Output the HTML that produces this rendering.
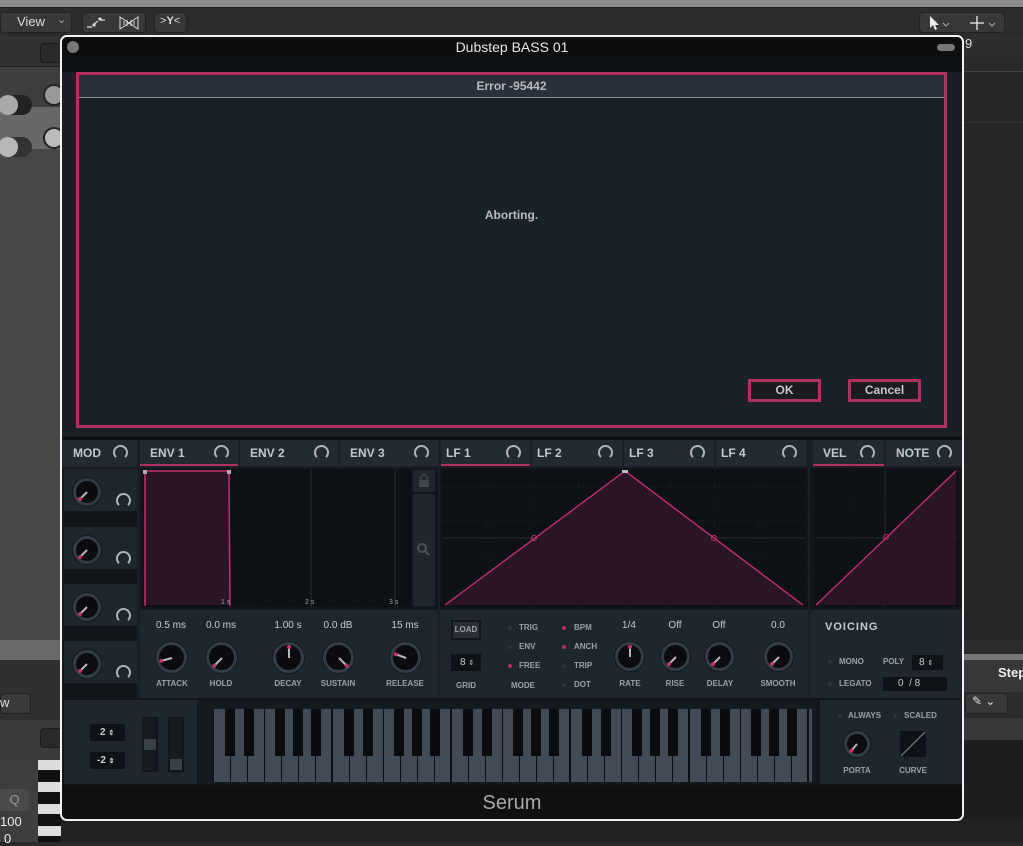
<!DOCTYPE html>
<html><head><meta charset="utf-8"><style>
*{margin:0;padding:0;box-sizing:border-box}
body{width:1023px;height:842px;overflow:hidden;position:relative;background:#2a2a2a;font-family:"Liberation Sans",sans-serif}
.a{position:absolute}
.t{position:absolute;color:#c4c9ce;font-size:12px;font-weight:bold;white-space:nowrap}
.lbl{position:absolute;color:#9aa1a8;font-size:8px;font-weight:bold;transform:translateX(-50%);white-space:nowrap}
.val{position:absolute;color:#c8ccd0;font-size:10px;transform:translateX(-50%);white-space:nowrap}
.k{position:absolute;border-radius:50%;background:#0a0c0f;border:3px solid #343c45;box-shadow:0 0 0 1px #14181c}
.k i{position:absolute;left:50%;top:50%;width:2px;height:45%;margin-left:-1px;background:#b8b8b8;transform-origin:top center}
.k i:after{content:"";position:absolute;bottom:-2px;left:-1px;width:4px;height:4px;background:#c2306a;border-radius:50%}
.arc{position:absolute;width:15px;height:15px;border-radius:50%;border:2px solid #b0b4b8;border-bottom-color:transparent}
.tab{position:absolute;top:440px;height:26px;background:#232a32}
.tab .t{top:6px;left:10px}
.tab .arc{top:5px;right:9px}
.dot{position:absolute;width:4px;height:4px;border-radius:50%;background:#2e353c}
.dot.m{background:#b0305f}
.sm{position:absolute;color:#9aa1a8;font-size:8px;font-weight:bold}
</style></head><body>
<div class="a" style="left:0;top:0;width:1023px;height:7px;background:#8c8c8c"></div>
<div class="a" style="left:0;top:7px;width:1023px;height:29px;background:#2c2c2c;border-top:1px solid #1a1a1a"></div>
<div class="a" style="left:0;top:12px;width:72px;height:21px;background:#383838;border:1px solid #222;border-radius:4px"></div>
<div class="a" style="left:17px;top:14px;color:#ddd;font-size:13px">View</div>
<div class="a" style="left:57px;top:13px;color:#aaa;font-size:11px">⌄</div>
<div class="a" style="left:82px;top:12px;width:64px;height:21px;background:#383838;border:1px solid #222;border-radius:4px"></div>
<svg class="a" style="left:84px;top:14px" width="60" height="17"><path d="M3 13h5M9 11l5-4M16 6h5" stroke="#ddd" stroke-width="1.3" fill="none"/><circle cx="10" cy="11" r="1.6" fill="#ddd"/><circle cx="16" cy="5" r="1.6" fill="#ddd"/><path d="M36 3v12l9-6 9 6V3l-9 6z" stroke="#ddd" fill="none"/><path d="M40 7v4M43 6v6M47 6v6M50 7v4" stroke="#ddd"/></svg>
<div class="a" style="left:154px;top:12px;width:33px;height:21px;background:#383838;border:1px solid #222;border-radius:4px"></div>
<div class="a" style="left:160px;top:15px;color:#ddd;font-size:11px">&gt;<b>Y</b>&lt;</div>
<div class="a" style="left:919px;top:12px;width:86px;height:21px;background:#383838;border:1px solid #222;border-radius:4px"></div>
<svg class="a" style="left:925px;top:14px" width="78" height="17"><path d="M5 2v12l3-3 2 5 2-1-2-4h4z" fill="#eee"/><path d="M18 9l3 3 3-3" stroke="#aaa" fill="none"/><path d="M52 2v14M45 9h14" stroke="#eee" stroke-width="1.3"/><path d="M64 9l3 3 3-3" stroke="#aaa" fill="none"/></svg>

<div class="a" style="left:0;top:36px;width:61px;height:30px;background:#323232"></div>
<div class="a" style="left:40px;top:43px;width:24px;height:20px;background:#2a2a2a;border:1px solid #1b1b1b;border-radius:4px"></div>
<div class="a" style="left:0;top:66px;width:61px;height:41px;background:#3e3e3e;border-top:1px solid #222"></div>
<div class="a" style="left:0;top:107px;width:61px;height:42px;background:#686868"></div>
<div class="a" style="left:0;top:149px;width:61px;height:491px;background:#474747"></div>
<div class="a" style="left:0;top:95px;width:32px;height:20px;background:#222;border-radius:10px"></div>
<div class="a" style="left:-2px;top:95px;width:20px;height:20px;background:#aaa;border-radius:50%"></div>
<div class="a" style="left:0;top:137px;width:32px;height:20px;background:#333;border-radius:10px"></div>
<div class="a" style="left:-2px;top:137px;width:20px;height:20px;background:#b8b8b8;border-radius:50%"></div>
<div class="a" style="left:43px;top:84px;width:22px;height:22px;background:#999;border-radius:50%;border:2px solid #222"></div>
<div class="a" style="left:43px;top:127px;width:22px;height:22px;background:#bbb;border-radius:50%;border:2px solid #222"></div>
<div class="a" style="left:0;top:640px;width:61px;height:20px;background:#6a6a6a"></div>
<div class="a" style="left:0;top:660px;width:61px;height:60px;background:#303030"></div>
<div class="a" style="left:0;top:693px;width:31px;height:21px;background:#3a3a3a;border:1px solid #222;border-radius:4px"></div>
<div class="a" style="left:0;top:695px;color:#ddd;font-size:13px">w</div>
<div class="a" style="left:0;top:720px;width:61px;height:40px;background:#3a3a3a"></div>
<div class="a" style="left:40px;top:728px;width:24px;height:20px;background:#2a2a2a;border:1px solid #1b1b1b;border-radius:4px"></div>
<div class="a" style="left:0;top:760px;width:38px;height:82px;background:#3e3e3e"></div>
<div class="a" style="left:0;top:789px;width:29px;height:22px;background:#4a4a4a;border-radius:3px;color:#999;font-size:13px;text-align:center;line-height:22px">Q</div>
<div class="a" style="left:0;top:814px;color:#eee;font-size:13px">100</div>
<div class="a" style="left:4px;top:831px;color:#eee;font-size:13px">0</div>
<div class="a" style="left:38px;top:760px;width:23px;height:82px;background:repeating-linear-gradient(#ddd 0 10px,#111 10px 22px)"></div>

<div class="a" style="left:963px;top:36px;width:60px;height:20px;background:#2e2e2e"></div>
<div class="a" style="left:965px;top:36px;color:#ddd;font-size:13px">9</div>
<div class="a" style="left:963px;top:56px;width:60px;height:16px;background:#2a2a2a;border-bottom:1px solid #444"></div>
<div class="a" style="left:963px;top:72px;width:60px;height:568px;background:#262626"></div>
<div class="a" style="left:963px;top:122px;width:60px;height:1px;background:#333"></div>
<div class="a" style="left:963px;top:640px;width:60px;height:14px;background:#2c2c2c"></div>
<div class="a" style="left:963px;top:654px;width:60px;height:6px;background:#777"></div>
<div class="a" style="left:963px;top:660px;width:60px;height:32px;background:#383838"></div>
<div class="a" style="left:998px;top:665px;color:#eee;font-size:13px;font-weight:bold">Step</div>
<div class="a" style="left:963px;top:692px;width:60px;height:26px;background:#2c2c2c"></div>
<div class="a" style="left:965px;top:693px;width:43px;height:21px;background:#383838;border:1px solid #222;border-radius:4px;color:#ddd;font-size:12px;padding-left:6px">✎ ⌄</div>
<div class="a" style="left:963px;top:718px;width:60px;height:22px;background:#393939"></div>
<div class="a" style="left:963px;top:740px;width:60px;height:102px;background:#1e1e1e"></div>
<div class="a" style="left:61px;top:820px;width:962px;height:22px;background:#222"></div>

<div class="a" style="left:60px;top:35px;width:904px;height:786px;border:2px solid #f2f2f2;border-radius:7px;background:#1a1f25;overflow:hidden">
 <div class="a" style="left:0;top:0;width:900px;height:21px;background:#0e0e0e"></div>
 <div class="a" style="left:5px;top:4px;width:12px;height:12px;border-radius:50%;background:#777"></div>
 <div class="a" style="left:875px;top:7px;width:18px;height:7px;border-radius:4px;background:#777"></div>
 <div class="a" style="left:0;top:2px;width:900px;text-align:center;color:#e6e6e6;font-size:14px">Dubstep BASS 01</div>
 <div class="a" style="left:0;top:21px;width:900px;height:14px;background:#0c1014"></div>
 <div class="a" style="left:0;top:748px;width:900px;height:36px;background:#101010"></div>
 <div class="a" style="left:0;top:755px;width:900px;text-align:center;color:#a8a8a8;font-size:20px">Serum</div>
</div>

<div class="a" style="left:76px;top:72px;width:871px;height:356px;border:3px solid #b0305f;background:#1b2129"></div>
<div class="a" style="left:79px;top:75px;width:865px;height:23px;background:#2a3039;border-bottom:1px solid #8a8f95"></div>
<div class="a" style="left:79px;top:79px;width:865px;text-align:center;color:#b8bcc0;font-size:12px;font-weight:bold">Error -95442</div>
<div class="a" style="left:79px;top:208px;width:865px;text-align:center;color:#b8bcc0;font-size:12px;font-weight:bold">Aborting.</div>
<div class="a" style="left:748px;top:379px;width:73px;height:23px;border:3px solid #b0305f;background:#1a1c20;color:#c8c8c8;font-size:12px;font-weight:bold;text-align:center;line-height:17px">OK</div>
<div class="a" style="left:848px;top:379px;width:73px;height:23px;border:3px solid #b0305f;background:#1a1c20;color:#c8c8c8;font-size:12px;font-weight:bold;text-align:center;line-height:17px">Cancel</div>

<div class="a" style="left:63px;top:437px;width:898px;height:3px;background:#0c0f12"></div>
<div class="tab" style="left:63px;width:74px"><span class="t">MOD</span><span class="arc"></span></div>
<div class="tab" style="left:140px;width:98px;border-bottom:2px solid #b0305f"><span class="t">ENV 1</span><span class="arc"></span></div>
<div class="tab" style="left:240px;width:98px"><span class="t">ENV 2</span><span class="arc"></span></div>
<div class="tab" style="left:340px;width:98px"><span class="t">ENV 3</span><span class="arc"></span></div>
<div class="tab" style="left:441px;width:89px;border-bottom:2px solid #b0305f"><span class="t" style="left:5px">LF 1</span><span class="arc"></span></div>
<div class="tab" style="left:532px;width:90px"><span class="t" style="left:5px">LF 2</span><span class="arc"></span></div>
<div class="tab" style="left:624px;width:90px"><span class="t" style="left:5px">LF 3</span><span class="arc"></span></div>
<div class="tab" style="left:716px;width:90px"><span class="t" style="left:5px">LF 4</span><span class="arc"></span></div>
<div class="tab" style="left:813px;width:71px;border-bottom:2px solid #b0305f"><span class="t">VEL</span><span class="arc"></span></div>
<div class="tab" style="left:886px;width:75px"><span class="t">NOTE</span><span class="arc"></span></div>

<div class="a" style="left:63px;top:468px;width:74px;height:230px;background:#12161a"></div>
<div class="a" style="left:64px;top:469px;width:73px;height:42px;background:#1f262d"></div>
<div class="a" style="left:64px;top:527px;width:73px;height:42px;background:#1f262d"></div>
<div class="a" style="left:64px;top:584px;width:73px;height:42px;background:#1f262d"></div>
<div class="a" style="left:64px;top:641px;width:73px;height:42px;background:#1f262d"></div>
<div class="k" style="left:73px;top:478px;width:28px;height:28px"><i style="transform:rotate(45deg)"></i></div>
<div class="k" style="left:73px;top:536px;width:28px;height:28px"><i style="transform:rotate(45deg)"></i></div>
<div class="k" style="left:73px;top:593px;width:28px;height:28px"><i style="transform:rotate(45deg)"></i></div>
<div class="k" style="left:73px;top:650px;width:28px;height:28px"><i style="transform:rotate(45deg)"></i></div>
<span class="arc" style="left:116px;top:493px"></span>
<span class="arc" style="left:116px;top:551px"></span>
<span class="arc" style="left:116px;top:608px"></span>
<span class="arc" style="left:116px;top:665px"></span>

<div class="a" style="left:140px;top:468px;width:298px;height:140px;background:#12161a"></div>
<svg class="a" style="left:143px;top:470px" width="268" height="137">
 <rect width="268" height="137" fill="#0d1115"/>
 <g stroke="#1c2228" stroke-dasharray="1 4"><path d="M21 0v137M42 0v137M63 0v137M105 0v137M126 0v137M147 0v137M189 0v137M210 0v137M231 0v137"/></g>
 <path d="M168 0v137M252 0v137" stroke="#2a3036"/>
 <rect x="2" y="1" width="84" height="134" fill="#2a1526"/>
 <path d="M2 136V1h84l1 135" stroke="#c2306a" stroke-width="1.5" fill="none"/>
 <rect x="0" y="0" width="4" height="4" fill="#aaa"/><rect x="84" y="0" width="4" height="4" fill="#aaa"/>
 <text x="78" y="134" fill="#9aa1a8" font-size="7" font-family="Liberation Sans">1 s</text>
 <text x="162" y="134" fill="#9aa1a8" font-size="7" font-family="Liberation Sans">2 s</text>
 <text x="246" y="134" fill="#9aa1a8" font-size="7" font-family="Liberation Sans">3 s</text>
</svg>
<div class="a" style="left:413px;top:470px;width:22px;height:22px;background:#1f262d"></div>
<svg class="a" style="left:418px;top:474px" width="12" height="14"><path d="M3 6V4a3 3 0 016 0v2" stroke="#3e464e" stroke-width="1.5" fill="none"/><rect x="1" y="6" width="10" height="7" fill="#3e464e"/></svg>
<div class="a" style="left:413px;top:494px;width:22px;height:112px;background:#1f262d"></div>
<svg class="a" style="left:417px;top:543px" width="14" height="14"><circle cx="5" cy="5" r="4" stroke="#4a525a" stroke-width="2" fill="none"/><path d="M8 8l4 4" stroke="#4a525a" stroke-width="2"/></svg>

<div class="a" style="left:140px;top:608px;width:298px;height:90px;background:#1f262d;border-top:2px solid #12161a"></div>
<div class="val" style="left:171px;top:620px">0.5 ms</div>
<div class="val" style="left:221px;top:620px">0.0 ms</div>
<div class="val" style="left:288px;top:620px">1.00 s</div>
<div class="val" style="left:338px;top:620px">0.0 dB</div>
<div class="val" style="left:405px;top:620px">15 ms</div>
<div class="k" style="left:156px;top:642px;width:31px;height:31px"><i style="transform:rotate(75deg)"></i></div>
<div class="k" style="left:206px;top:642px;width:31px;height:31px"><i style="transform:rotate(45deg)"></i></div>
<div class="k" style="left:273px;top:642px;width:31px;height:31px"><i style="transform:rotate(180deg)"></i></div>
<div class="k" style="left:323px;top:642px;width:31px;height:31px"><i style="transform:rotate(-45deg)"></i></div>
<div class="k" style="left:390px;top:642px;width:31px;height:31px"><i style="transform:rotate(110deg)"></i></div>
<div class="lbl" style="left:172px;top:679px">ATTACK</div>
<div class="lbl" style="left:221px;top:679px">HOLD</div>
<div class="lbl" style="left:288px;top:679px">DECAY</div>
<div class="lbl" style="left:338px;top:679px">SUSTAIN</div>
<div class="lbl" style="left:405px;top:679px">RELEASE</div>

<div class="a" style="left:440px;top:468px;width:368px;height:140px;background:#12161a"></div>
<svg class="a" style="left:443px;top:470px" width="362" height="137">
 <rect width="362" height="137" fill="#0d1115"/>
 <g stroke="#1e252b" stroke-dasharray="1 3"><path d="M45 0v137M90 0v137M135 0v137M227 0v137M272 0v137M317 0v137M0 17h362M0 51h362M0 85h362M0 119h362"/></g>
 <path d="M0 34h362M0 102h362M182 0v137" stroke="#1e252b" stroke-dasharray="1 3"/>
 <path d="M0 68h362" stroke="#222a30"/>
 <path d="M2 135L182 1L360 135z" fill="#2a1526"/>
 <path d="M2 135L182 1L360 135" stroke="#c2306a" stroke-width="1.4" fill="none"/>
 <circle cx="91" cy="68" r="2.5" stroke="#c2306a" fill="none"/><circle cx="271" cy="68" r="2.5" stroke="#c2306a" fill="none"/>
 <rect x="179" y="0" width="6" height="3" fill="#bbb"/>
</svg>

<div class="a" style="left:810px;top:468px;width:151px;height:140px;background:#12161a"></div>
<svg class="a" style="left:815px;top:470px" width="143" height="137">
 <rect width="143" height="137" fill="#0d1115"/>
 <path d="M0 34h143M0 102h143M35 0v137M105 0v137" stroke="#1e252b" stroke-dasharray="1 3"/>
 <path d="M0 68h143M70 0v137" stroke="#222a30"/>
 <path d="M1 135L141 1V135z" fill="#2a1526"/>
 <path d="M1 135L141 1" stroke="#c2306a" stroke-width="1.4"/>
 <circle cx="71" cy="67" r="2.5" stroke="#c2306a" fill="none"/>
</svg>

<div class="a" style="left:440px;top:608px;width:368px;height:90px;background:#1f262d;border-top:2px solid #12161a"></div>
<div class="a" style="left:451px;top:620px;width:30px;height:20px;background:#2a2f35;border:2px solid #12161a;color:#9aa1a8;font-size:8px;font-weight:bold;text-align:center;line-height:16px">LOAD</div>
<div class="a" style="left:451px;top:654px;width:30px;height:17px;background:#0f1216;color:#c8ccd0;font-size:10px;line-height:17px;padding-left:9px">8 <span style="font-size:7px">⇕</span></div>
<div class="lbl" style="left:466px;top:681px">GRID</div>
<div class="dot" style="left:508px;top:626px"></div><div class="sm" style="left:519px;top:623px">TRIG</div>
<div class="dot" style="left:508px;top:645px"></div><div class="sm" style="left:519px;top:642px">ENV</div>
<div class="dot m" style="left:508px;top:664px"></div><div class="sm" style="left:519px;top:661px">FREE</div>
<div class="lbl" style="left:523px;top:681px">MODE</div>
<div class="dot m" style="left:562px;top:626px"></div><div class="sm" style="left:574px;top:623px">BPM</div>
<div class="dot m" style="left:562px;top:645px"></div><div class="sm" style="left:574px;top:642px">ANCH</div>
<div class="dot" style="left:562px;top:664px"></div><div class="sm" style="left:574px;top:661px">TRIP</div>
<div class="dot" style="left:562px;top:683px"></div><div class="sm" style="left:574px;top:680px">DOT</div>
<div class="val" style="left:629px;top:620px">1/4</div>
<div class="val" style="left:675px;top:620px">Off</div>
<div class="val" style="left:719px;top:620px">Off</div>
<div class="val" style="left:778px;top:620px">0.0</div>
<div class="k" style="left:615px;top:642px;width:29px;height:29px"><i style="transform:rotate(180deg)"></i></div>
<div class="k" style="left:661px;top:642px;width:29px;height:29px"><i style="transform:rotate(45deg)"></i></div>
<div class="k" style="left:705px;top:642px;width:29px;height:29px"><i style="transform:rotate(45deg)"></i></div>
<div class="k" style="left:764px;top:642px;width:29px;height:29px"><i style="transform:rotate(45deg)"></i></div>
<div class="lbl" style="left:630px;top:679px">RATE</div>
<div class="lbl" style="left:675px;top:679px">RISE</div>
<div class="lbl" style="left:720px;top:679px">DELAY</div>
<div class="lbl" style="left:778px;top:679px">SMOOTH</div>

<div class="a" style="left:810px;top:608px;width:151px;height:90px;background:#1f262d;border-top:2px solid #12161a"></div>
<div class="a" style="left:825px;top:621px;color:#c8ccd0;font-size:11px;font-weight:bold;letter-spacing:1px">VOICING</div>
<div class="dot" style="left:828px;top:660px"></div><div class="sm" style="left:839px;top:657px">MONO</div>
<div class="sm" style="left:883px;top:657px">POLY</div>
<div class="a" style="left:912px;top:655px;width:31px;height:15px;background:#0f1216;color:#c8ccd0;font-size:10px;line-height:15px;padding-left:7px">8 <span style="font-size:7px">⇕</span></div>
<div class="dot" style="left:828px;top:682px"></div><div class="sm" style="left:839px;top:679px">LEGATO</div>
<div class="a" style="left:883px;top:677px;width:64px;height:14px;background:#0f1216;color:#c8ccd0;font-size:10px;line-height:14px;padding-left:15px">0 &nbsp;/ 8</div>

<div class="a" style="left:63px;top:698px;width:898px;height:87px;background:#12161a"></div>
<div class="a" style="left:64px;top:700px;width:133px;height:84px;background:#1f262d"></div>
<div class="a" style="left:90px;top:724px;width:35px;height:17px;background:#0f1216;color:#c8ccd0;font-size:10px;font-weight:bold;line-height:17px;padding-left:10px">2 <span style="font-size:7px">⇕</span></div>
<div class="a" style="left:90px;top:752px;width:35px;height:17px;background:#0f1216;color:#c8ccd0;font-size:10px;font-weight:bold;line-height:17px;padding-left:7px">-2 <span style="font-size:7px">⇕</span></div>
<div class="a" style="left:142px;top:717px;width:16px;height:55px;background:#171b1f;border:2px solid #12161a"></div>
<div class="a" style="left:144px;top:739px;width:12px;height:11px;background:#3a4047"></div>
<div class="a" style="left:168px;top:717px;width:16px;height:55px;background:#171b1f;border:2px solid #12161a"></div>
<div class="a" style="left:170px;top:759px;width:12px;height:11px;background:#3a4047"></div>
<div class="a" style="left:199px;top:700px;width:618px;height:84px;background:#151a1f"></div>
<svg class="a" style="left:213px;top:709px" width="599" height="73">
 <defs><pattern id="oct" width="119" height="73" patternUnits="userSpaceOnUse">
  <rect width="119" height="73" fill="#0c0f12"/>
  <g fill="#414a55"><rect x="1" y="0" width="16" height="73"/><rect x="18" y="0" width="16" height="73"/><rect x="35" y="0" width="16" height="73"/><rect x="52" y="0" width="16" height="73"/><rect x="69" y="0" width="16" height="73"/><rect x="86" y="0" width="16" height="73"/><rect x="103" y="0" width="15" height="73"/></g>
  <g fill="#0a0c0e"><rect x="12" y="0" width="10" height="47"/><rect x="31" y="0" width="10" height="47"/><rect x="62" y="0" width="10" height="47"/><rect x="80" y="0" width="10" height="47"/><rect x="98" y="0" width="10" height="47"/></g>
 </pattern></defs>
 <rect width="599" height="73" fill="url(#oct)"/>
</svg>
<div class="a" style="left:820px;top:700px;width:141px;height:84px;background:#1f262d"></div>
<div class="dot" style="left:838px;top:714px"></div><div class="sm" style="left:848px;top:711px">ALWAYS</div>
<div class="dot" style="left:893px;top:714px"></div><div class="sm" style="left:904px;top:711px">SCALED</div>
<div class="k" style="left:844px;top:731px;width:26px;height:26px"><i style="transform:rotate(40deg)"></i></div>
<svg class="a" style="left:900px;top:731px" width="26" height="26"><rect width="26" height="26" fill="#0f1216"/><path d="M1 25L25 1" stroke="#6a7077" stroke-width="1.3"/></svg>
<div class="lbl" style="left:857px;top:766px">PORTA</div>
<div class="lbl" style="left:913px;top:766px">CURVE</div>
</body></html>
